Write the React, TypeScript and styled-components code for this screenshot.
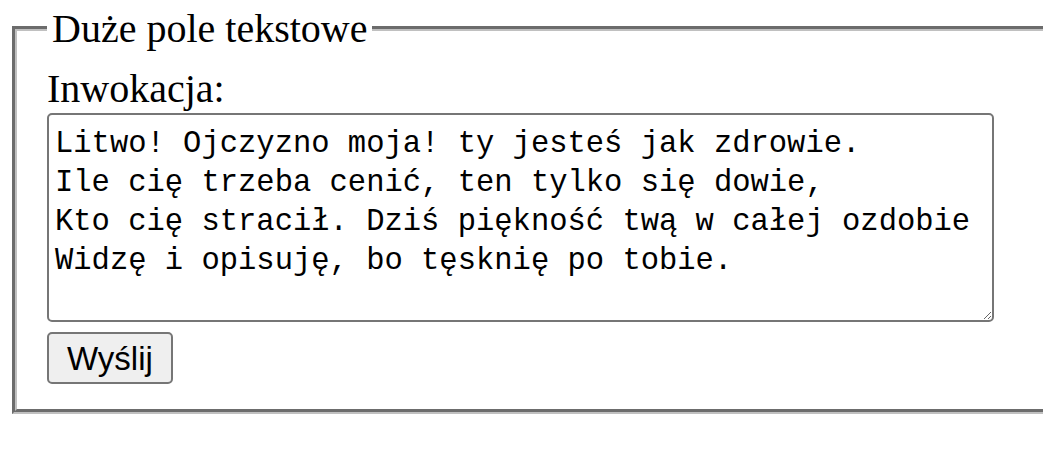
import React from "react";
import styled, { createGlobalStyle } from "styled-components";

const GlobalStyle = createGlobalStyle`
  html, body {
    margin: 0;
    padding: 0;
    background: #ffffff;
    overflow: hidden;
  }
  body {
    font-family: "Liberation Serif", "Times New Roman", serif;
    color: #000000;
  }
`;

const Form = styled.form`
  margin: 0;
  padding: 5px 0 0 12px;
`;

const Fieldset = styled.fieldset`
  box-sizing: border-box;
  width: 1100px;
  margin: 0;
  padding: 14px 30px 25px 30px;
  border: 5px groove rgb(192, 192, 192);
  min-inline-size: 0;
`;

const Legend = styled.legend`
  padding: 0 5px;
  font-family: "Liberation Serif", "Times New Roman", serif;
  font-size: 40px;
  line-height: 47px;
`;

const Label = styled.label`
  display: block;
  font-family: "Liberation Serif", "Times New Roman", serif;
  font-size: 40px;
  line-height: 46px;
`;

const TextArea = styled.textarea`
  display: block;
  box-sizing: border-box;
  width: 947px;
  height: 209px;
  margin: 1px 0 0 0;
  padding: 10px 6px 5px 6px;
  border: 2px solid #767676;
  border-radius: 5px;
  font-family: "Liberation Mono", "DejaVu Sans Mono", monospace;
  font-size: 30.5px;
  line-height: 39px;
  color: #000000;
  background: #ffffff;
  outline: none;
  overflow: hidden;
`;

const Button = styled.button`
  display: block;
  box-sizing: border-box;
  height: 52px;
  margin: 10px 0 0 0;
  padding: 0 18px;
  border: 2px solid #767676;
  border-radius: 5px;
  background: #efefef;
  font-family: "Liberation Sans", Arial, sans-serif;
  font-size: 33px;
  line-height: 1;
  color: #000000;
`;

const poem = `Litwo! Ojczyzno moja! ty jesteś jak zdrowie.
Ile cię trzeba cenić, ten tylko się dowie,
Kto cię stracił. Dziś piękność twą w całej ozdobie
Widzę i opisuję, bo tęsknię po tobie.`;

export default function App() {
  return (
    <>
      <GlobalStyle />
      <Form onSubmit={(e) => e.preventDefault()}>
        <Fieldset>
          <Legend>Duże pole tekstowe</Legend>
          <Label htmlFor="inwokacja">Inwokacja:</Label>
          <TextArea id="inwokacja" defaultValue={poem} spellCheck={false} />
          <Button type="submit">Wyślij</Button>
        </Fieldset>
      </Form>
    </>
  );
}
